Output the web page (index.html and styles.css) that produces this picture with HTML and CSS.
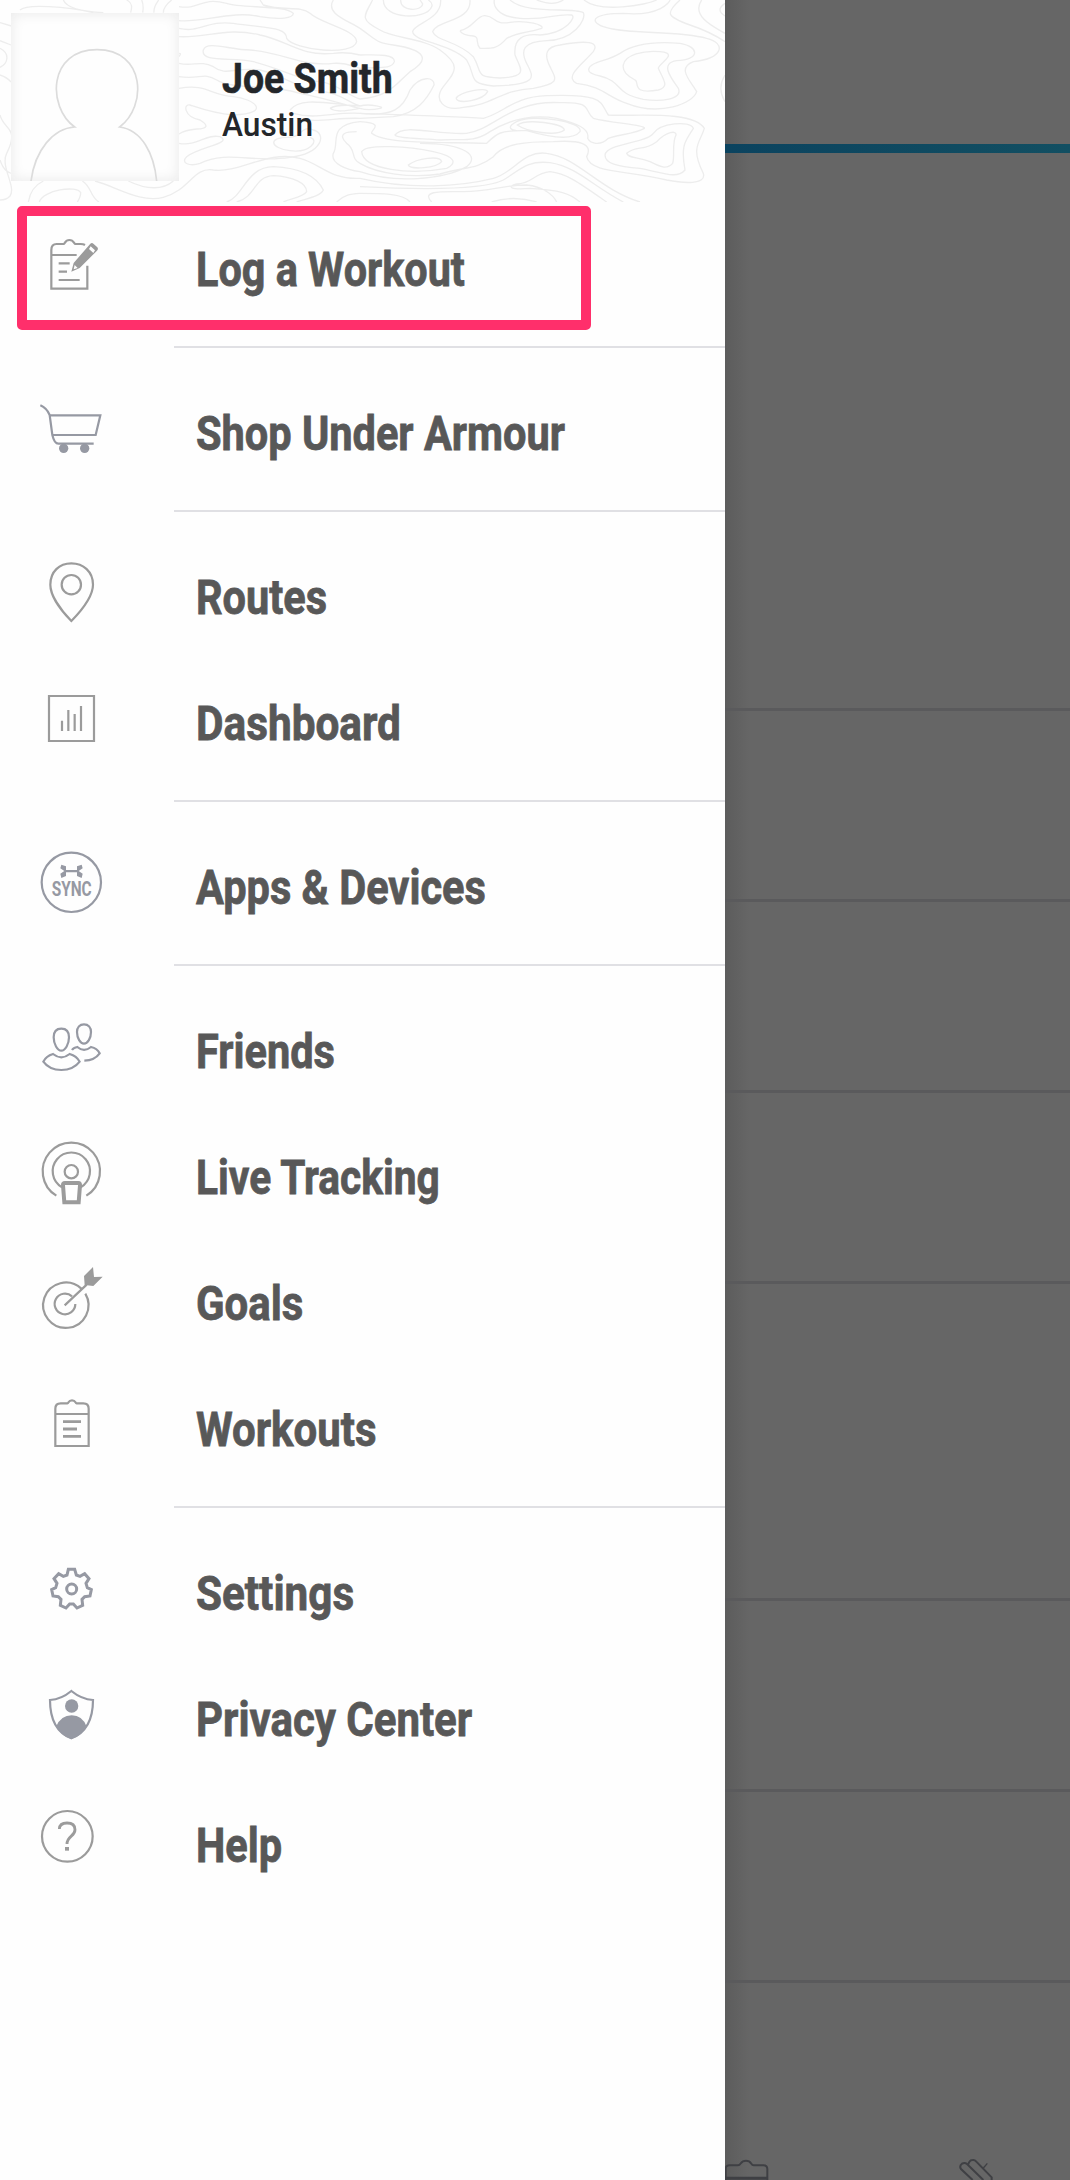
FILE: index.html
```html
<!DOCTYPE html>
<html lang="en">
<head>
<meta charset="utf-8">
<title>Menu</title>
<link rel="stylesheet" href="styles.css">
</head>
<body>
<div class="screen">
<aside class="drawer">
<header class="profile">
<svg class="contours" viewBox="0 0 2175 606" aria-hidden="true">
<path d="M60 30C80 10 200 20 280 38M0 68L34 78M190 0C200 25 250 35 310 38M380 0C400 10 395 25 392 38M425 0C432 15 430 25 428 38M462 38C460 20 470 10 476 0M490 38C490 20 505 8 515 0M0 122L33 135M0 145C30 160 25 190 0 202M0 225C20 232 28 240 33 246M0 345C10 390 60 380 20 460C0 500 50 560 30 588Q20 600 0 600M0 480C10 510 22 515 33 520M85 606C90 575 105 555 130 543M118 606C130 570 230 555 242 578Q242 590 232 606M247 543C275 560 270 590 297 606M285 543C350 560 420 610 490 592C570 570 580 500 640 510C720 520 800 450 900 475C960 490 990 540 1080 535M385 543C440 570 490 570 520 543"/>
<path d="M537 85C600 100 620 60 700 70C800 85 860 80 860 115C880 150 1060 170 1070 125C1070 90 960 70 930 40C900 15 850 35 790 15L780 0M537 62C600 70 700 30 780 50C840 60 880 55 880 40C860 15 720 25 680 10C600 -10 600 30 537 20M1000 0C975 40 1040 60 1080 85M537 110C620 115 680 80 780 105C860 120 900 170 1000 160C1040 155 1060 160 1080 165M537 160C545 160 540 165 537 170M610 150C620 120 690 150 750 150C860 160 900 200 1000 190C1040 187 1060 200 1080 205M610 150C600 190 700 170 760 185C840 205 900 240 960 245C1010 250 1040 285 1080 297M537 190C580 200 600 180 640 200C680 230 700 200 780 210C860 230 900 270 970 275C1020 280 1050 310 1080 318M537 230C600 240 610 215 650 240C700 270 800 250 900 280C1000 300 1050 320 1080 325M537 265C620 250 630 285 700 290C760 295 820 340 700 345C640 340 600 325 570 315C550 310 550 350 600 360Q640 385 590 387Q555 390 537 402M870 330C900 290 980 310 1080 318M990 325C1010 312 1050 315 1080 318M990 325C1010 340 1050 330 1080 325M880 340C950 360 1000 335 1080 340M890 355C950 370 1010 352 1080 355M537 430C590 440 620 400 660 410C700 430 600 440 560 470C540 490 570 500 600 490C680 450 760 490 870 472C970 460 980 400 940 390C900 375 910 410 870 412C800 410 810 445 870 452C930 460 960 420 930 412M1080 365C980 375 1020 430 1000 460C990 490 1040 510 1080 515M1070 395C1040 395 1010 400 1040 430C1070 450 1050 475 1080 490M680 606C730 590 740 500 820 500C930 505 960 550 970 570C960 590 920 595 890 606M710 606C770 590 760 530 820 527C880 530 920 550 920 575C910 592 870 596 850 606M1010 606C1030 585 1050 582 1080 580"/>
<g transform="translate(1080 0)">
<path d="M38 0C10 50 0 60 60 90C100 115 190 115 240 150C310 200 280 220 250 260C220 300 250 335 310 322C400 315 420 270 520 265C600 250 590 240 570 200C550 160 560 140 600 135C680 120 720 125 700 155C670 190 610 230 650 250C730 260 740 290 800 310C900 350 1000 310 1010 275C990 240 950 205 1000 185C1090 175 1100 130 1040 115C950 90 800 105 730 80C680 60 710 40 790 40C900 50 930 5 930 0M70 0C70 60 200 60 215 20Q220 10 205 0M122 0C120 35 185 35 188 12L180 0M242 0C245 60 160 70 158 95C160 125 270 130 320 180C350 230 320 250 400 258C540 255 520 230 500 190C480 150 490 125 560 122C640 120 680 60 670 38C640 20 500 45 450 0M330 0C335 65 230 60 218 95C230 125 290 120 340 170C370 220 340 230 420 234C510 230 480 205 465 165C460 115 490 100 540 105C620 100 650 50 635 45C580 40 570 60 480 55C410 50 400 15 403 0M530 0Q580 20 610 0M672 0C720 40 860 15 890 0M960 0C915 40 920 50 990 75C1050 95 1080 115 1095 125M1025 0C990 50 1070 85 1095 100M1095 10Q1065 30 1095 48M1095 225Q1070 265 1095 305M0 85C50 120 50 130 100 135C200 150 210 180 150 215C110 250 90 290 0 297M0 165C40 165 105 160 103 185C95 210 50 200 0 205M0 340C100 350 130 325 150 270C180 225 225 230 222 255C200 300 170 340 100 350L0 355M300 92C340 85 350 45 375 47C410 50 400 75 450 67C500 60 555 75 545 85C500 100 480 95 440 115C410 150 390 145 360 145C345 130 360 110 340 108Q305 105 300 92M288 295C300 275 380 260 383 275C370 300 295 315 288 295M0 318C30 310 80 322 60 325C30 332 10 328 0 325"/>
<path d="M686 208C690 185 740 185 780 160C830 125 900 125 960 130C1020 140 1020 180 950 182C900 190 930 230 955 265C970 300 900 305 850 298C760 280 790 245 720 228C690 222 685 215 686 208ZM790 195C795 165 850 150 900 155C960 160 895 190 895 205C910 240 930 260 895 270C810 285 840 245 825 240Q785 220 790 195ZM105 405C130 370 230 405 320 400C400 390 450 300 600 308C700 305 670 330 700 355C760 370 860 375 853 385C830 400 770 405 745 415C720 440 690 430 683 415C690 385 650 370 590 355C500 340 430 370 390 395C340 430 300 415 240 420C180 415 110 415 105 405ZM0 365C80 370 30 390 35 400C80 435 250 425 380 430C410 400 420 390 500 392C580 415 640 420 660 395C670 365 520 340 470 365C440 380 450 390 470 392M472 375C500 355 610 370 613 390C590 410 500 395 472 375ZM0 340C150 345 300 350 370 355C430 340 460 290 560 287C740 280 720 310 745 345C820 350 1000 330 1033 385C1020 430 990 440 1030 520C1040 555 970 550 920 540C800 510 690 520 680 470C700 430 660 420 580 425C500 425 430 430 400 470C350 510 310 500 240 522C150 535 50 520 0 490M735 465C740 430 860 430 880 400C900 370 990 360 1000 385C980 420 960 430 975 510C950 540 900 515 840 505C770 500 735 490 735 465ZM800 460C830 435 850 455 890 425C920 395 950 390 948 405C935 430 945 470 938 490C920 510 900 500 870 485C830 470 805 475 800 460ZM5 455C20 430 150 440 220 455C290 470 290 490 260 505C150 525 10 510 5 455ZM145 495C170 475 240 465 245 485C230 505 150 510 145 495ZM180 430C320 430 360 470 320 500C250 540 100 550 0 515M0 535C150 570 300 560 400 535C460 520 490 450 560 460C650 470 720 570 840 606M0 560C200 570 370 570 430 540C480 510 500 480 570 488C650 500 700 560 790 606M740 606C660 550 620 520 570 515C520 520 520 550 470 552C440 560 450 570 510 565C600 570 630 580 660 606M0 580C60 580 130 580 150 606M215 606C180 570 250 575 310 575C400 575 420 555 500 555C550 560 580 585 590 606M395 606Q460 585 530 606"/>
</g>
</svg>
<svg class="avatar" viewBox="33 39 504 504" aria-hidden="true">
<path d="M93 543C105 450 160 385 224 381C140 320 145 149 291 149C437 149 442 320 359 381C425 390 462 460 470 543"/>
</svg>
<div class="who">
<h1 class="name">Joe Smith</h1>
<p class="city">Austin</p>
</div>
</header>
<nav>
<ul class="menu">
<li class="item"><svg class="icon" viewBox="96 90 240 240"><path d="M255 150Q250 147 242 147H226C222 147 222 135 208 135S196 147 190 147H170Q154 147 154 165V281H262V212M154 180H230M176 205H209M176 230H201M176 255H239"/><path class="solid" d="M214 230L221 204L271 146Q276 142 281 147L292 157Q296 162 291 167L239 219Z"/><path class="gap" d="M272 154L285 166L280 174L267 162ZM224 210L233 219L221 223Z"/></svg><span class="label log">Log a Workout</span></li>
<li class="rule"></li>
<li class="item"><svg class="icon cool" viewBox="96 27 240 240"><path d="M121 76Q140 84 149 105L157 165Q163 191 175 191H281M151 106H301L287 165H158"/><circle class="solid" cx="191" cy="205" r="14"/><circle class="solid" cx="254" cy="205" r="14"/></svg><span class="label shop">Shop Under Armour</span></li>
<li class="rule"></li>
<li class="item"><svg class="icon" viewBox="36 39 240 240"><path d="M154 243C120 208 91 165 91 134C91 95 118 70 154 70S219 95 219 134C219 165 188 208 154 243Z"/><circle cx="154" cy="134" r="29"/></svg><span class="label routes">Routes</span></li>
<li class="item"><svg class="icon" viewBox="36 417 240 240"><path d="M87 468H222V603H87ZM126 542V573M145 510V573M164 522V573M183 498V573"/></svg><span class="label dashboard">Dashboard</span></li>
<li class="rule"></li>
<li class="item"><svg class="icon cool" viewBox="36 69 240 240"><circle cx="154" cy="187" r="89"/><path class="solid" d="M124 134L138 139V150H171V139L185 134L188 145L176 153L188 161L185 174L171 168V157H138V168L124 174L121 161L133 153L121 145Z"/><text class="sync" x="95" y="229" textLength="120" lengthAdjust="spacingAndGlyphs">SYNC</text></svg><span class="label apps">Apps &amp; Devices</span></li>
<li class="rule"></li>
<li class="item"><svg class="icon cool" viewBox="36 561 240 240"><path d="M124 626C109 626 101 636 101 652C101 672 112 692 124 692S147 672 147 652C147 636 139 626 124 626ZM192 613C179 613 171 622 171 636C171 654 181 671 192 671S213 654 213 636C213 622 205 613 192 613ZM99 702Q78 708 70 725Q88 750 124 750T179 725Q170 708 149 702Q124 722 99 702ZM156 690Q160 683 172 681Q192 698 213 681Q232 685 239 700Q224 721 193 722"/></svg><span class="label friends">Friends</span></li>
<li class="item"><svg class="icon" viewBox="36 69 240 240"><path d="M109 257A86 86 0 1 1 199 257M126 232A56 56 0 1 1 182 232"/><circle cx="154" cy="185" r="20"/><path class="thick" d="M135 219H175Q181 219 180 226L176 277H133L129 226Q128 219 135 219Z"/></svg><span class="label live">Live Tracking</span></li>
<li class="item"><svg class="icon" viewBox="36 447 240 240"><path d="M184 536A68 68 0 1 0 196 551M156 559A31 31 0 1 0 166 582M134 586L200 524"/><path class="solid" d="M192 498L219 471L222 501L248 500L220 528L194 525Z"/></svg><span class="label goals">Goals</span></li>
<li class="item"><svg class="icon" viewBox="36 825 240 240"><path d="M106 1008V896Q106 880 122 880H142C147 880 144 871 156 871S165 880 170 880H190Q206 880 206 896V1008ZM106 912H206"/><path class="bars" d="M129 935H183M129 957H171M129 979H183"/></svg><span class="label workouts">Workouts</span></li>
<li class="rule"></li>
<li class="item"><svg class="icon cool gear" viewBox="36 27 240 240"><path d="M145 88H164L169 105L180 109L194 101L207 116L198 130L202 143L214 149L210 168L194 170L186 178L188 196L171 204L160 192H149L138 204L121 196L123 178L115 170L99 168L95 149L107 143L111 130L102 116L116 101L130 109L141 105Z"/><circle cx="155" cy="147" r="15"/></svg><span class="label settings">Settings</span></li>
<li class="item"><svg class="icon cool" viewBox="36 405 240 240"><path d="M154 453Q124 478 90 480C90 545 115 580 154 595C193 580 219 545 219 480Q185 478 154 453Z"/><circle class="solid" cx="155" cy="498" r="20"/><path class="solid" d="M108 560Q123 526 155 526T200 560Q180 590 154 597Q128 590 108 560Z"/></svg><span class="label privacy">Privacy Center</span></li>
<li class="item"><svg class="icon" viewBox="36 783 240 240"><circle cx="142" cy="889" r="76"/><path class="query" d="M118 867Q119 849 141 849Q165 849 165 869C165 889 141 888 141 912"/><path class="solid" d="M135 921H147V932H135Z"/></svg><span class="label help">Help</span></li>
</ul>
</nav>
<div class="highlight"></div>
</aside>
<main class="backdrop">
<div class="topbar"></div>
<div class="row first"></div>
<div class="row"></div>
<div class="row"></div>
<div class="row"></div>
<div class="row tall"></div>
<div class="row"></div>
<div class="row"></div>
<div class="tabs">
<svg class="tab" viewBox="75 234 132 66"><path d="M77 300V267Q77 256 88 256H114C124 256 120 242 138 242S151 256 161 256H190Q202 256 202 268V300"/><path class="band" d="M77 295H203"/></svg>
<svg class="tab" viewBox="774 234 132 66"><path d="M818 300L783 267Q777 258 786 251Q794 246 801 252L850 300M804 255Q808 240 818 240Q824 239 829 245L875 292V300"/><path class="thin" d="M850 264L862 250"/></svg>
</div>
</main>
</div>
</body>
</html>
```
FILE: styles.css
```css
* {
  box-sizing: border-box;
}

body {
  margin: 0;
  font-family: Roboto, "Liberation Sans", sans-serif;
}

.screen {
  display: flex;
  width: 1070px;
  height: 2180px;
  overflow: hidden;
}

.drawer {
  position: relative;
  flex: 0 0 725px;
  background: #fefefe;
}

.profile {
  position: relative;
  display: flex;
  gap: 43px;
  height: 202px;
  padding: 13px 0 0 11px;
}

.contours {
  position: absolute;
  inset: 0;
  width: 725px;
  height: 202px;
  fill: none;
  stroke: #ededed;
  stroke-width: 4;
}

.avatar {
  position: relative;
  flex: none;
  width: 168px;
  height: 168px;
  background: #fefefe;
  box-shadow: inset 0 0 14px #e9e9e9;
  fill: none;
  stroke: #dcdcdc;
  stroke-width: 5;
}

.who {
  position: relative;
  padding-top: 41px;
  color: #23262a;
}

.name {
  margin: 0;
  font-size: 42px;
  line-height: 50px;
  font-weight: 700;
  white-space: nowrap;
  -webkit-text-stroke: 0.6px;
  transform: scaleX(0.892);
  transform-origin: left;
}

.city {
  margin: 0;
  padding-top: 1px;
  font-size: 33px;
  line-height: 40px;
  font-weight: 500;
  transform: scaleX(0.96);
  transform-origin: left;
}

.menu {
  margin: 0;
  padding: 0;
  list-style: none;
}

.item {
  display: flex;
  align-items: center;
  gap: 84px;
  height: 126px;
  padding-left: 32px;
}

.rule {
  height: 2px;
  margin: 18px 0 18px 174px;
  background: #e0e0e4;
}

.icon {
  flex: none;
  width: 80px;
  height: 80px;
  fill: none;
  stroke: #9b9b9b;
  stroke-width: 6.6;
}

.icon.cool {
  stroke: #9699a3;
}

.icon .solid {
  fill: #9b9b9b;
  stroke: none;
}

.icon.cool .solid,
.icon .sync {
  fill: #9699a3;
  stroke: none;
}

.icon .gap {
  fill: #fefefe;
  stroke: none;
}

.icon .thick {
  stroke-width: 12;
}

.icon .bars,
.icon .query {
  stroke-width: 8.5;
}

.icon.gear {
  stroke-width: 9;
}

.sync {
  font-size: 60px;
  font-weight: 700;
}

.label {
  padding-top: 10px;
  font-size: 48px;
  line-height: 60px;
  font-weight: 700;
  color: #585858;
  white-space: nowrap;
  -webkit-text-stroke: 0.8px;
  transform: scaleX(0.865);
  transform-origin: left;
}

.log {
  transform: scaleX(0.862);
}

.dashboard {
  transform: scaleX(0.882);
}

.live {
  transform: scaleX(0.848);
}

.goals,
.workouts,
.privacy {
  transform: scaleX(0.874);
}

.settings {
  transform: scaleX(0.88);
}

.highlight {
  position: absolute;
  left: 17px;
  top: 206px;
  width: 574px;
  height: 124px;
  border: 10px solid #ff2f6b;
  border-radius: 5px;
}

.backdrop {
  display: flex;
  flex: 1;
  flex-direction: column;
  background: linear-gradient(90deg, #5c5c5c, #666666 24px);
}

.topbar {
  height: 153px;
  background: linear-gradient(90deg, #0b435f, #124f62) bottom / 100% 9px no-repeat;
}

.row {
  height: 191px;
  border-bottom: 3px solid #5a5a5c;
}

.row.first {
  height: 558px;
}

.row.tall {
  height: 317px;
}

.tabs {
  display: flex;
  flex: 1;
  align-items: flex-end;
  gap: 189px;
}

.tab {
  width: 44px;
  height: 22px;
  fill: none;
  stroke: #3f4044;
  stroke-width: 6;
}

.tab .band {
  stroke-width: 9;
}

.tab .thin {
  stroke-width: 4;
}
```
